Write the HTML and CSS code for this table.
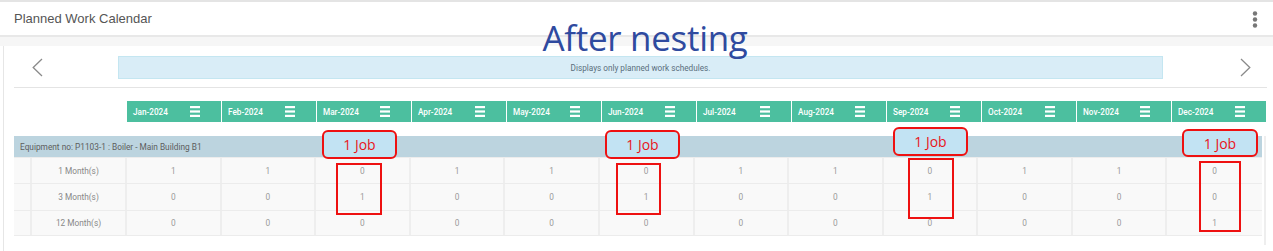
FILE: index.html
```html
<!DOCTYPE html>
<html lang="en">
<head>
<meta charset="utf-8">
<title>Planned Work Calendar</title>
<link rel="stylesheet" href="styles.css">
</head>
<body>
<div class="page">
  <div class="topstrip"></div>
  <header class="pagehead">
    <h1 class="title">Planned Work Calendar</h1>
    <svg class="kebab" width="6" height="17" viewBox="0 0 6 17"><circle cx="3" cy="2.5" r="2.2" fill="#777"/><circle cx="3" cy="8.5" r="2.2" fill="#777"/><circle cx="3" cy="14.5" r="2.2" fill="#777"/></svg>
  </header>
  <div class="band"></div>
  <section class="card">
    <div class="nav">
      <div class="nav-side nav-left">
        <svg width="11" height="19" viewBox="0 0 11 19"><path d="M10 1 L1.2 9.5 L10 18" fill="none" stroke="#8a8a8a" stroke-width="1.3"/></svg>
      </div>
      <div class="info">Displays only planned work schedules.</div>
      <div class="nav-side nav-right">
        <svg width="11" height="19" viewBox="0 0 11 19"><path d="M1 1 L9.8 9.5 L1 18" fill="none" stroke="#8a8a8a" stroke-width="1.3"/></svg>
      </div>
    </div>

    <div class="months">
      <div class="mcell"><span>Jan-2024</span><svg class="ham" width="10" height="11" viewBox="0 0 10 11"><rect y="0" width="10" height="2.2" fill="#fff"/><rect y="4.4" width="10" height="2.2" fill="#fff"/><rect y="8.8" width="10" height="2.2" fill="#fff"/></svg></div>
      <div class="mcell"><span>Feb-2024</span><svg class="ham" width="10" height="11" viewBox="0 0 10 11"><rect y="0" width="10" height="2.2" fill="#fff"/><rect y="4.4" width="10" height="2.2" fill="#fff"/><rect y="8.8" width="10" height="2.2" fill="#fff"/></svg></div>
      <div class="mcell"><span>Mar-2024</span><svg class="ham" width="10" height="11" viewBox="0 0 10 11"><rect y="0" width="10" height="2.2" fill="#fff"/><rect y="4.4" width="10" height="2.2" fill="#fff"/><rect y="8.8" width="10" height="2.2" fill="#fff"/></svg></div>
      <div class="mcell"><span>Apr-2024</span><svg class="ham" width="10" height="11" viewBox="0 0 10 11"><rect y="0" width="10" height="2.2" fill="#fff"/><rect y="4.4" width="10" height="2.2" fill="#fff"/><rect y="8.8" width="10" height="2.2" fill="#fff"/></svg></div>
      <div class="mcell"><span>May-2024</span><svg class="ham" width="10" height="11" viewBox="0 0 10 11"><rect y="0" width="10" height="2.2" fill="#fff"/><rect y="4.4" width="10" height="2.2" fill="#fff"/><rect y="8.8" width="10" height="2.2" fill="#fff"/></svg></div>
      <div class="mcell"><span>Jun-2024</span><svg class="ham" width="10" height="11" viewBox="0 0 10 11"><rect y="0" width="10" height="2.2" fill="#fff"/><rect y="4.4" width="10" height="2.2" fill="#fff"/><rect y="8.8" width="10" height="2.2" fill="#fff"/></svg></div>
      <div class="mcell"><span>Jul-2024</span><svg class="ham" width="10" height="11" viewBox="0 0 10 11"><rect y="0" width="10" height="2.2" fill="#fff"/><rect y="4.4" width="10" height="2.2" fill="#fff"/><rect y="8.8" width="10" height="2.2" fill="#fff"/></svg></div>
      <div class="mcell"><span>Aug-2024</span><svg class="ham" width="10" height="11" viewBox="0 0 10 11"><rect y="0" width="10" height="2.2" fill="#fff"/><rect y="4.4" width="10" height="2.2" fill="#fff"/><rect y="8.8" width="10" height="2.2" fill="#fff"/></svg></div>
      <div class="mcell"><span>Sep-2024</span><svg class="ham" width="10" height="11" viewBox="0 0 10 11"><rect y="0" width="10" height="2.2" fill="#fff"/><rect y="4.4" width="10" height="2.2" fill="#fff"/><rect y="8.8" width="10" height="2.2" fill="#fff"/></svg></div>
      <div class="mcell"><span>Oct-2024</span><svg class="ham" width="10" height="11" viewBox="0 0 10 11"><rect y="0" width="10" height="2.2" fill="#fff"/><rect y="4.4" width="10" height="2.2" fill="#fff"/><rect y="8.8" width="10" height="2.2" fill="#fff"/></svg></div>
      <div class="mcell"><span>Nov-2024</span><svg class="ham" width="10" height="11" viewBox="0 0 10 11"><rect y="0" width="10" height="2.2" fill="#fff"/><rect y="4.4" width="10" height="2.2" fill="#fff"/><rect y="8.8" width="10" height="2.2" fill="#fff"/></svg></div>
      <div class="mcell"><span>Dec-2024</span><svg class="ham" width="10" height="11" viewBox="0 0 10 11"><rect y="0" width="10" height="2.2" fill="#fff"/><rect y="4.4" width="10" height="2.2" fill="#fff"/><rect y="8.8" width="10" height="2.2" fill="#fff"/></svg></div>
    </div>

    <div class="gridwrap">
      <div class="equip">Equipment no: P1103-1 : Boiler - Main Building B1</div>
      <div class="row">
        <div class="c c0"></div><div class="c lbl">1 Month(s)</div>
        <div class="c">1</div><div class="c">1</div><div class="c">0</div><div class="c">1</div><div class="c">1</div><div class="c">0</div>
        <div class="c">1</div><div class="c">1</div><div class="c">0</div><div class="c">1</div><div class="c">1</div><div class="c">0</div>
      </div>
      <div class="row row-mid">
        <div class="c c0"></div><div class="c lbl">3 Month(s)</div>
        <div class="c">0</div><div class="c">0</div><div class="c">1</div><div class="c">0</div><div class="c">0</div><div class="c">1</div>
        <div class="c">0</div><div class="c">0</div><div class="c">1</div><div class="c">0</div><div class="c">0</div><div class="c">0</div>
      </div>
      <div class="row">
        <div class="c c0"></div><div class="c lbl">12 Month(s)</div>
        <div class="c">0</div><div class="c">0</div><div class="c">0</div><div class="c">0</div><div class="c">0</div><div class="c">0</div>
        <div class="c">0</div><div class="c">0</div><div class="c">0</div><div class="c">0</div><div class="c">0</div><div class="c">1</div>
      </div>
    </div>
  </section>

  <div class="note">After nesting</div>
  <div class="job job-mar">1 Job</div>
  <div class="job job-jun">1 Job</div>
  <div class="job job-sep">1 Job</div>
  <div class="job job-dec">1 Job</div>
  <div class="mark mark-mar"></div>
  <div class="mark mark-jun"></div>
  <div class="mark mark-sep"></div>
  <div class="mark mark-dec"></div>
</div>
</body>
</html>
```

FILE: styles.css
```css
* { box-sizing: border-box; }
html, body { margin: 0; padding: 0; background: #fff; }
body { font-family: Roboto, "Liberation Sans", sans-serif; }

.page { position: relative; width: 1273px; height: 251px; overflow: hidden; }

.topstrip { height: 2px; background: #e4e4e4; }

.pagehead {
  height: 33px;
  display: flex;
  align-items: center;
  justify-content: space-between;
  padding: 0 15px 0 14px;
}
.title {
  margin: 0;
  font-family: "Liberation Sans", Arial, sans-serif;
  font-weight: 400;
  font-size: 13px;
  color: #555;
}
.kebab { display: block; margin-top: 1px; }

.band {
  height: 11px;
  border-top: 2px solid #e8e8e8;
  background: #f6f6f6;
}

.card {
  margin-left: 3px;
  border-left: 1px solid #e6e6e6;
  padding: 0 6px 6px 10px;
}

.nav {
  display: flex;
  align-items: center;
  padding: 10px 0 8px;
  border-bottom: 1px solid #e4e4e4;
}
.nav-side { width: 104px; display: flex; align-items: center; }
.nav-left { padding-left: 18px; }
.nav-right { justify-content: flex-end; padding-right: 16px; }
.nav-side svg { display: block; }
.info {
  width: 1045px;
  height: 23px;
  background: #d9edf7;
  border: 1px solid #c4e6f1;
  display: flex;
  align-items: center;
  justify-content: center;
  font-size: 8.2px;
  color: #5a6e7c;
}

.months {
  margin: 13px 0 0 113px;
  width: 1139px;
  height: 21px;
  display: grid;
  grid-template-columns: repeat(12, 1fr);
  gap: 1px;
  background: #fff;
}
.mcell {
  background: #4cbf9f;
  display: flex;
  align-items: center;
  justify-content: space-between;
  padding: 0 21px 0 6px;
  color: #fff;
  font-size: 8.2px;
  font-weight: 500;
}
.ham { display: block; }

.gridwrap {
  margin-top: 14px;
  width: 1252px;
  padding-bottom: 9px;
  border-right: 2px solid #eeeeee;
}
.equip {
  width: 1248px;
  height: 21px;
  background: #bcd4df;
  display: flex;
  align-items: center;
  padding-left: 6px;
  font-size: 8.3px;
  color: #5d5d5d;
}
.row {
  width: 1248px;
  height: 26px;
  display: grid;
  grid-template-columns: 18px 95px repeat(12, 1fr);
  background: #f9f9f9;
  border-top: 1px solid #ececec;
}
.row-mid { height: 27px; }
.row:last-child { border-bottom: 1px solid #ececec; }
.c {
  border-right: 2px solid #eeeeee;
  display: flex;
  align-items: center;
  justify-content: center;
  font-size: 8.3px;
  color: #999;
}
.c:last-child { border-right: 0; }
.lbl { color: #888; }

/* annotation overlays */
.note {
  position: absolute;
  left: 520px;
  top: 20px;
  width: 250px;
  text-align: center;
  font-family: "Open Sans", "Noto Sans", sans-serif;
  font-size: 35px;
  line-height: 35px;
  letter-spacing: -0.3px;
  color: #2f4a9f;
}
.job {
  position: absolute;
  width: 75px;
  height: 29px;
  border: 2px solid #ee1111;
  border-radius: 6px;
  background: #c2e3f3;
  display: flex;
  align-items: center;
  justify-content: center;
  font-family: "Open Sans", "Noto Sans", sans-serif;
  font-size: 14px;
  color: #e8141b;
}
.job-mar { left: 322px; top: 130px; }
.job-jun { left: 605px; top: 130px; }
.job-sep { left: 893px; top: 127px; }
.job-dec { left: 1182px; top: 129px; width: 76px; height: 28px; }

.mark { position: absolute; border: 2px solid #ee1111; }
.mark-mar { left: 336px; top: 163px; width: 46px; height: 52px; }
.mark-jun { left: 616px; top: 163px; width: 45px; height: 52px; }
.mark-sep { left: 908px; top: 158px; width: 46px; height: 61px; }
.mark-dec { left: 1199px; top: 161px; width: 42px; height: 71px; }
```
